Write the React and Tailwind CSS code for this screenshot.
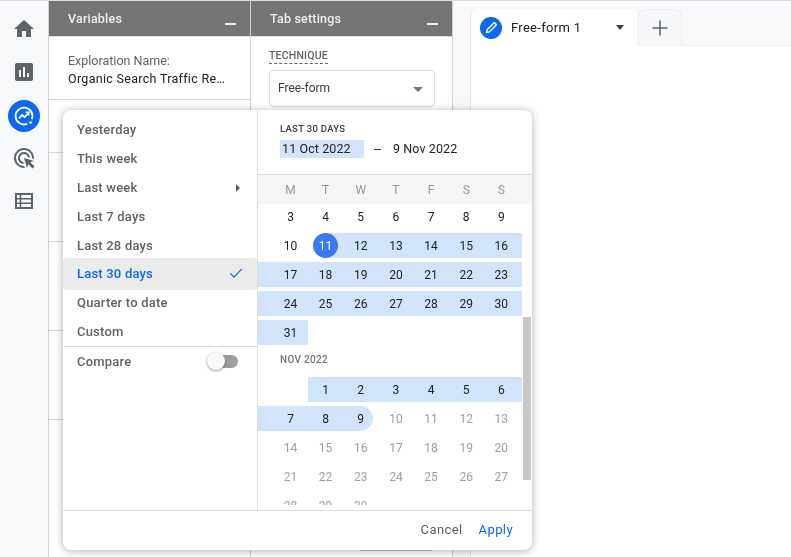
import React from 'react';

const presets = ['Yesterday', 'This week', 'Last week', 'Last 7 days', 'Last 28 days', 'Last 30 days', 'Quarter to date', 'Custom'];
const weekdays = ['M', 'T', 'W', 'T', 'F', 'S', 'S'];

// null = empty cell, start/end/range = selection state, muted = outside the range
const october = [
  [[3], [4], [5], [6], [7], [8], [9]],
  [[10], [11, 'start'], [12, 'range'], [13, 'range'], [14, 'range'], [15, 'range'], [16, 'range']],
  [[17, 'range'], [18, 'range'], [19, 'range'], [20, 'range'], [21, 'range'], [22, 'range'], [23, 'range']],
  [[24, 'range'], [25, 'range'], [26, 'range'], [27, 'range'], [28, 'range'], [29, 'range'], [30, 'range']],
  [[31, 'range'], null, null, null, null, null, null],
];
const november = [
  [null, [1, 'range'], [2, 'range'], [3, 'range'], [4, 'range'], [5, 'range'], [6, 'range']],
  [[7, 'range'], [8, 'range'], [9, 'end'], [10, 'muted'], [11, 'muted'], [12, 'muted'], [13, 'muted']],
  [[14, 'muted'], [15, 'muted'], [16, 'muted'], [17, 'muted'], [18, 'muted'], [19, 'muted'], [20, 'muted']],
  [[21, 'muted'], [22, 'muted'], [23, 'muted'], [24, 'muted'], [25, 'muted'], [26, 'muted'], [27, 'muted']],
  [[28, 'muted'], [29, 'muted'], [30, 'muted'], null, null, null, null],
];

function Icon({ d, className }) {
  return (
    <svg viewBox="0 0 24 24" className={className} fill="currentColor">
      <path d={d} />
    </svg>
  );
}

function Sidebar() {
  return (
    <div className="w-[49px] shrink-0 bg-[#f8f9fa] border-r border-[#cfd1d4] flex flex-col items-center text-[#5f6368] pt-[16px]">
      <Icon className="w-6 h-6" d="M10 20v-6h4v6h5v-8h3L12 3 2 12h3v8z" />
      <Icon
        className="w-6 h-6 mt-[19px]"
        d="M19 3H5c-1.1 0-2 .9-2 2v14c0 1.1.9 2 2 2h14c1.1 0 2-.9 2-2V5c0-1.1-.9-2-2-2zM9 17H7v-7h2v7zm4 0h-2V7h2v10zm4 0h-2v-4h2v4z"
      />
      <div className="w-8 h-8 mt-[16px] rounded-full bg-[#0b68f0] flex items-center justify-center">
        <svg viewBox="0 0 24 24" className="w-[22px] h-[22px]" fill="none" stroke="white" strokeWidth="2">
          <path d="M20.5 15.5A9.2 9.2 0 1 0 15.5 20.5" />
          <path d="M6.5 14.5l3.5-3.6 2.8 2.3 4.2-4.7" />
          <path d="M13.8 8h3.4v3.4" strokeWidth="1.6" />
          <circle cx="19.2" cy="19.2" r="1.5" fill="white" stroke="none" />
        </svg>
      </div>
      <Icon
        className="w-6 h-6 mt-[14px]"
        d="M11.71,17.99C8.53,17.84,6,15.22,6,12c0-3.31,2.69-6,6-6c3.22,0,5.84,2.53,5.99,5.71l-2.1-0.63C15.48,9.31,13.89,8,12,8 c-2.21,0-4,1.79-4,4c0,1.89,1.31,3.48,3.08,3.89L11.71,17.99z M22,12c0,0.3-0.01,0.6-0.04,0.9l-1.97-0.59C20,12.21,20,12.1,20,12 c0-4.42-3.58-8-8-8s-8,3.58-8,8s3.58,8,8,8c0.1,0,0.21,0,0.31-0.01l0.59,1.97C12.6,21.99,12.3,22,12,22C6.48,22,2,17.52,2,12 C2,6.48,6.48,2,12,2S22,6.48,22,12z M18.23,16.26L22,15l-10-3l3,10l1.26-3.77l4.27,4.27l1.98-1.98L18.23,16.26z"
      />
      <svg viewBox="0 0 24 24" className="w-6 h-6 mt-[19px]" fill="none" stroke="currentColor">
        <rect x="4" y="5" width="16" height="14" strokeWidth="2" />
        <path d="M4 9.7h16M4 14.3h16M8.5 5v14" strokeWidth="1.6" />
      </svg>
    </div>
  );
}

function PanelHeader({ title }) {
  return (
    <div className="h-[36px] bg-[#757575] flex items-start justify-between pl-[19px] pr-[14px] pt-[10px] border-b border-[#dadce0]">
      <span className="text-[12.5px] leading-4 font-medium tracking-[0.2px] text-[#eeeeee]">{title}</span>
      <span className="w-[11px] h-[2px] mt-[12px] bg-[#eeeeee]" />
    </div>
  );
}

function DayCell({ day }) {
  if (!day) return <div />;
  const [n, state] = day;
  const base = 'h-[25px] flex items-center justify-center';

  if (state === 'start') {
    return (
      <div className={`${base} bg-[linear-gradient(to_right,transparent_50%,#d2e3fc_50%)]`}>
        <span className="w-[25px] h-[25px] rounded-full bg-[#3b78f2] text-white flex items-center justify-center">{n}</span>
      </div>
    );
  }
  if (state === 'end') {
    return <div className={`${base} pl-[5px] mr-[5px] bg-[#d2e3fc] rounded-r-full text-[#202124]`}>{n}</div>;
  }
  if (state === 'range') return <div className={`${base} bg-[#d2e3fc] text-[#202124]`}>{n}</div>;
  if (state === 'muted') return <div className={`${base} text-[#9e9e9e]`}>{n}</div>;
  return <div className={`${base} text-[#202124]`}>{n}</div>;
}

function Month({ rows }) {
  return (
    <div className="flex flex-col gap-[4px]">
      {rows.map((row, i) => (
        <div key={i} className="grid grid-cols-[50px_repeat(5,35.17px)_38px] w-[264px] text-[12px] [&>*:first-child]:pl-[15px] [&>*:last-child]:pr-[3px]">
          {row.map((day, j) => (
            <DayCell key={j} day={day} />
          ))}
        </div>
      ))}
    </div>
  );
}

function DatePopup() {
  return (
    <div className="absolute left-[63px] top-[109px] w-[469px] h-[440px] bg-white rounded-lg shadow-[0_1px_8px_rgba(0,0,0,0.32)] flex flex-col overflow-hidden">
      <div className="flex flex-1 min-h-0">
        {/* presets */}
        <div className="w-[195px] shrink-0 border-r border-[#dadce0] pt-[5.5px] text-[13px] font-medium tracking-[0.2px] text-[#5f6368]">
          {presets.map((p) => {
            const active = p === 'Last 30 days';
            return (
              <div key={p} className={`pl-[14px] pr-[14px] flex items-center justify-between ${active ? 'h-[32px] -my-[1.575px] relative bg-[#ebebeb] text-[#0b68f0] rounded-sm' : 'h-[28.85px]'}`}>
                <span>{p}</span>
                {active && (
                  <svg viewBox="0 0 16 16" className="w-[14px] h-[14px] -mt-[2px]" fill="none" stroke="#0b68f0" strokeWidth="1.4">
                    <path d="M1.5 8.5l4.2 4.2L14.5 3.5" />
                  </svg>
                )}
                {p === 'Last week' && <span className="w-0 h-0 mr-[3px] border-y-[4px] border-y-transparent border-l-[4px] border-l-[#5f6368]" />}
              </div>
            );
          })}
          <div className="border-t border-[#dadce0] h-[29px] pl-[14px] pr-[19px] flex items-center justify-between">
            <span>Compare</span>
            <span className="relative w-[23px] h-[13px] rounded-full bg-[#9e9e9e]">
              <span className="absolute -left-[8px] -top-[3px] w-[18px] h-[18px] rounded-full bg-[#f8f8f8] shadow-[0_1px_3px_rgba(0,0,0,0.4)]" />
            </span>
          </div>
        </div>

        {/* calendar */}
        <div className="relative flex-1 min-w-0 flex flex-col">
          <div className="h-[65px] shrink-0 border-b border-[#dadce0] pl-[22px] pt-[14px]">
            <div className="text-[9.5px] leading-[10px] font-medium tracking-[0.3px] text-[#3c4043]">LAST 30 DAYS</div>
            <div className="flex items-center mt-[6px] h-[18px] text-[12.5px] tracking-[0.1px] text-[#202124]">
              <span className="w-[84px] h-[18px] pl-[2px] bg-[#d2e3fc] flex items-center">11 Oct 2022</span>
              <span className="ml-[10px] w-[7px] h-[1px] bg-[#3c4043]" />
              <span className="ml-[12px]">9 Nov 2022</span>
            </div>
          </div>
          <div className="grid grid-cols-[50px_repeat(5,35.17px)_38px] w-[264px] h-[29px] shrink-0 items-center text-[12px] text-[#9e9e9e] [&>*:first-child]:pl-[15px] [&>*:last-child]:pr-[3px]">
            {weekdays.map((d, i) => (
              <div key={i} className="text-center">{d}</div>
            ))}
          </div>
          <div className="h-[301px] shrink-0 overflow-hidden">
            <Month rows={october} />
            <div className="h-[32px] pl-[22px] pt-[9px] text-[10px] leading-[12px] font-medium tracking-[0.3px] text-[#757575]">NOV 2022</div>
            <Month rows={november} />
          </div>
          {/* weekday strip background */}
          <div className="absolute left-0 right-0 top-[65px] h-[29px] bg-[#f5f5f5] -z-0 pointer-events-none mix-blend-multiply" />
          {/* scrollbar thumb */}
          <div className="absolute left-[265px] top-[207px] w-[8px] h-[163px] bg-[#c8c8c8]" />
        </div>
      </div>
      <div className="h-[40px] shrink-0 border-t border-[#dadce0] flex items-center justify-end gap-[16px] pr-[19px] pb-[1px] text-[13px] tracking-[0.4px]">
        <span className="text-[#5f6368]">Cancel</span>
        <span className="text-[#0b68f0]">Apply</span>
      </div>
    </div>
  );
}

export default function App() {
  return (
    <div className="relative w-[791px] h-[557px] overflow-hidden bg-white font-['Roboto',sans-serif] border-t border-[#dadce0] flex">
      <Sidebar />

      {/* Variables */}
      <div className="w-[202px] shrink-0 border-r border-[#cfd1d4] flex flex-col">
        <PanelHeader title="Variables" />
        <div className="h-[63px] border-b border-[#dadce0] pl-[19px] pr-[20px] pt-[15px] text-[12.5px] leading-[18px]">
          <div className="text-[#5f6368]">Exploration Name:</div>
          <div className="truncate text-[#202124] tracking-[0.3px]">Organic Search Traffic Report</div>
        </div>
        <div className="h-[53px] border-b border-[#dadce0]" />
        <div className="h-[89px] border-b border-[#dadce0]" />
        <div className="h-[89px] border-b border-[#dadce0]" />
        <div className="h-[89px] border-b border-[#dadce0]" />
      </div>

      {/* Tab settings */}
      <div className="w-[202px] shrink-0 border-r border-[#cfd1d4] flex flex-col">
        <PanelHeader title="Tab settings" />
        <div className="pl-[18px] pr-[17px] pt-[12px]">
          <span className="block w-fit text-[10.5px] leading-[14px] font-medium tracking-[0.2px] text-[#5f6368] border-b border-dashed border-[#5f6368]">TECHNIQUE</span>
          <div className="mt-[6px] h-[37px] border border-[#dadce0] rounded flex items-center justify-between pl-[8px] pr-[11px] text-[12px] text-[#3c4043]">
            <span className="-mt-[1px]">Free-form</span>
            <span className="w-0 h-0 mt-[2px] border-x-[5px] border-x-transparent border-t-[5px] border-t-[#757575]" />
          </div>
        </div>
        <div className="mt-auto mb-[6px] ml-[109px] w-[72px] h-[1px] bg-[#bdbdbd]" />
      </div>

      {/* Canvas */}
      <div className="flex-1 min-w-0 bg-[#f8f9fa] pl-[17px] pt-[8px] flex flex-col">
        <div className="flex h-[37px] shrink-0">
          <div className="w-[167px] bg-white rounded-t-lg border-l border-[#e4e6e8] flex items-center pl-[9px] pr-[13px]">
            <span className="w-[22px] h-[22px] rounded-full bg-[#0b68f0] flex items-center justify-center">
              <svg viewBox="0 0 24 24" className="w-[15px] h-[15px]" fill="none" stroke="white" strokeWidth="2.2" strokeLinejoin="round">
                <path d="M4 20l1-4.5L16.5 4l3.5 3.5L8.5 19z" />
              </svg>
            </span>
            <span className="ml-[9px] text-[13px] tracking-[0.3px] text-[#202124]">Free-form 1</span>
            <span className="ml-auto w-0 h-0 border-x-[4px] border-x-transparent border-t-[5px] border-t-[#3c4043]" />
          </div>
          <div className="ml-[1px] w-[44px] bg-[#f6f7f9] rounded-t-lg border border-b-0 border-[#eceef0] flex items-center justify-center text-[#5f6368]">
            <svg viewBox="0 0 16 16" className="w-4 h-4" fill="none" stroke="currentColor" strokeWidth="1.5">
              <path d="M8 .5v15M.5 8h15" />
            </svg>
          </div>
          <div className="flex-1 border-b border-[#eceef0]" />
        </div>
        <div className="flex-1 bg-white border-l border-[#e4e6e8]" />
      </div>

      <DatePopup />
    </div>
  );
}
